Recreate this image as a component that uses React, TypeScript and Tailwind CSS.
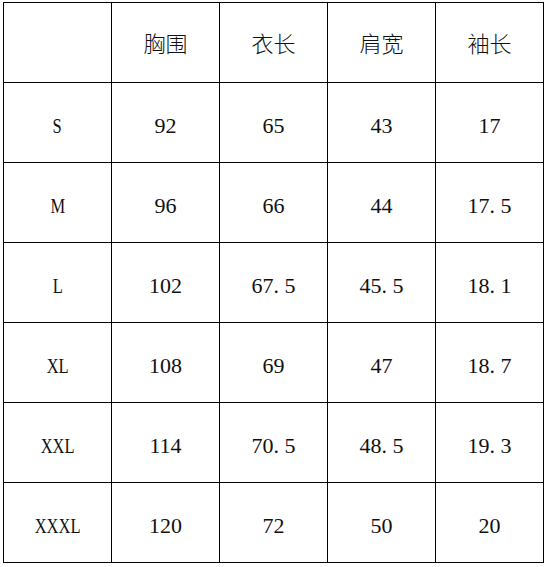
import React from "react";

const headers = ["", "胸围", "衣长", "肩宽", "袖长"];

const rows = [
  ["S", "92", "65", "43", "17"],
  ["M", "96", "66", "44", "17.5"],
  ["L", "102", "67.5", "45.5", "18.1"],
  ["XL", "108", "69", "47", "18.7"],
  ["XXL", "114", "70.5", "48.5", "19.3"],
  ["XXXL", "120", "72", "50", "20"],
];

// SimSun-style half-width period: the dot takes a full digit cell
const Num = ({ value }: { value: string }) => {
  const [a, b] = value.split(".");
  if (b === undefined) return <>{value}</>;
  return (
    <>
      {a}
      <span className="inline-block w-[0.5em] text-left">.</span>
      {b}
    </>
  );
};

const Cell = ({ children, cjk }: { children: React.ReactNode; cjk?: boolean }) => (
  <div
    className={`flex items-center justify-center border-r border-b border-black text-[22px] text-[#111] ${
      cjk ? "pb-[1px]" : "pt-[5px]"
    }`}
  >
    {children}
  </div>
);

export default function App() {
  return (
    <div className="w-[548px] h-[567px] bg-white pt-[2px] pl-[3px] font-['Liberation_Serif','Noto_Sans_CJK_SC',serif]">
      <div className="grid grid-cols-[repeat(5,108px)] grid-rows-[repeat(7,80px)] w-max border-l border-t border-black">
        {headers.map((h, i) => (
          <Cell key={i} cjk>
            <span className="font-['Noto_Sans_CJK_SC',sans-serif] font-light">{h}</span>
          </Cell>
        ))}
        {rows.map((row) =>
          row.map((v, j) => (
            <Cell key={row[0] + j}>
              {j === 0 ? (
                <span className="inline-block scale-x-[0.75]">{v}</span>
              ) : (
                <Num value={v} />
              )}
            </Cell>
          ))
        )}
      </div>
    </div>
  );
}
